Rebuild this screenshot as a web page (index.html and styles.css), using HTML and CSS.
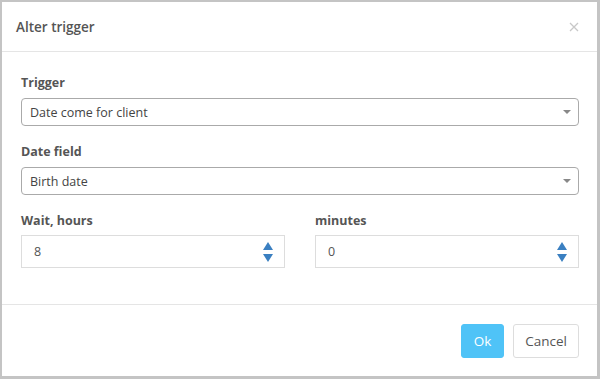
FILE: index.html
```html
<!DOCTYPE html>
<html lang="en">
<head>
    <meta charset="UTF-8">
    <meta name="viewport" content="width=device-width, initial-scale=1.0">
    <title>Alter trigger</title>
    <link rel="stylesheet" href="styles.css">
</head>
<body>
    <div class="dialog">
        <div class="dialog-header">
            <h1 class="dialog-title">Alter trigger</h1>
            <button type="button" class="close-btn" aria-label="Close">
                <svg width="10" height="10" viewBox="0 0 10 10"><path d="M1 1L9 9M9 1L1 9" stroke="#c8c8c8" stroke-width="1.3" fill="none"/></svg>
            </button>
        </div>

        <form class="dialog-body">
            <div class="form-group">
                <label for="trigger">Trigger</label>
                <div class="select-wrap">
                    <select id="trigger" class="form-select">
                        <option>Date come for client</option>
                    </select>
                </div>
            </div>

            <div class="form-group">
                <label for="dateField">Date field</label>
                <div class="select-wrap">
                    <select id="dateField" class="form-select">
                        <option>Birth date</option>
                    </select>
                </div>
            </div>

            <div class="form-row">
                <div class="form-group">
                    <label for="hours">Wait, hours</label>
                    <div class="spin-wrap">
                        <input type="text" id="hours" class="form-control" value="8">
                        <span class="spinner">
                            <svg width="10" height="20" viewBox="0 0 10 20"><path d="M5 0L10 8H0Z M0 12H10L5 20Z" fill="#3a7fc1"/></svg>
                        </span>
                    </div>
                </div>
                <div class="form-group">
                    <label for="minutes">minutes</label>
                    <div class="spin-wrap">
                        <input type="text" id="minutes" class="form-control" value="0">
                        <span class="spinner">
                            <svg width="10" height="20" viewBox="0 0 10 20"><path d="M5 0L10 8H0Z M0 12H10L5 20Z" fill="#3a7fc1"/></svg>
                        </span>
                    </div>
                </div>
            </div>
        </form>

        <div class="dialog-footer">
            <button type="button" class="btn btn-ok">Ok</button>
            <button type="button" class="btn btn-cancel">Cancel</button>
        </div>
    </div>
</body>
</html>
```

FILE: styles.css
```css
* {
    margin: 0;
    padding: 0;
    box-sizing: border-box;
}

body {
    font-family: 'Open Sans', 'Liberation Sans', sans-serif;
    font-size: 12.5px;
    color: #444;
    background: #fff;
}

.dialog {
    width: 600px;
    height: 379px;
    border: 2px solid #c4c4c4;
    border-right-width: 3px;
    border-bottom-width: 3px;
    background: #fff;
    display: flex;
    flex-direction: column;
}

.dialog-header {
    height: 50px;
    border-bottom: 1px solid #e5e5e5;
    display: flex;
    align-items: center;
    justify-content: space-between;
    padding: 0 16px 0 14px;
}

.dialog-title {
    font-size: 13.5px;
    font-weight: 600;
    color: #555;
}

.close-btn {
    background: none;
    border: none;
    width: 14px;
    height: 14px;
    display: flex;
    align-items: center;
    justify-content: center;
}

.dialog-body {
    flex: 1;
    padding: 22px 18px 0 19px;
}

.form-group {
    margin-bottom: 17px;
}

.form-group label {
    display: block;
    font-weight: 700;
    color: #555;
    line-height: 18px;
    margin-bottom: 6px;
}

.form-row .form-group label {
    margin-bottom: 5px;
}

.select-wrap {
    position: relative;
}

.select-wrap::after {
    content: '';
    position: absolute;
    right: 8px;
    top: 12px;
    border-left: 4px solid transparent;
    border-right: 4px solid transparent;
    border-top: 4px solid #888;
    pointer-events: none;
}

.form-select {
    appearance: none;
    width: 100%;
    height: 28px;
    padding: 0 8px;
    border: 1px solid #aaa;
    border-radius: 4px;
    background: #fff;
    font-family: inherit;
    font-size: 12.5px;
    color: #444;
}

.form-row {
    display: grid;
    grid-template-columns: 1fr 1fr;
    gap: 30px;
}

.spin-wrap {
    position: relative;
}

.form-control {
    width: 100%;
    height: 33px;
    padding: 0 12px;
    border: 1px solid #ddd;
    font-family: inherit;
    font-size: 12.5px;
    color: #555;
}

.spinner {
    position: absolute;
    right: 12px;
    top: 7px;
    display: flex;
}

.dialog-footer {
    height: 72px;
    border-top: 1px solid #e5e5e5;
    display: flex;
    justify-content: flex-end;
    align-items: flex-start;
    gap: 9px;
    padding: 19px 18px 0;
}

.btn {
    height: 34px;
    border-radius: 3px;
    font-family: inherit;
    font-size: 13.5px;
    cursor: pointer;
}

.btn-ok {
    width: 43px;
    background: #4fc3f7;
    border: 1px solid #4fc3f7;
    color: #fff;
}

.btn-cancel {
    width: 66px;
    background: #fff;
    border: 1px solid #ddd;
    color: #555;
}
```
